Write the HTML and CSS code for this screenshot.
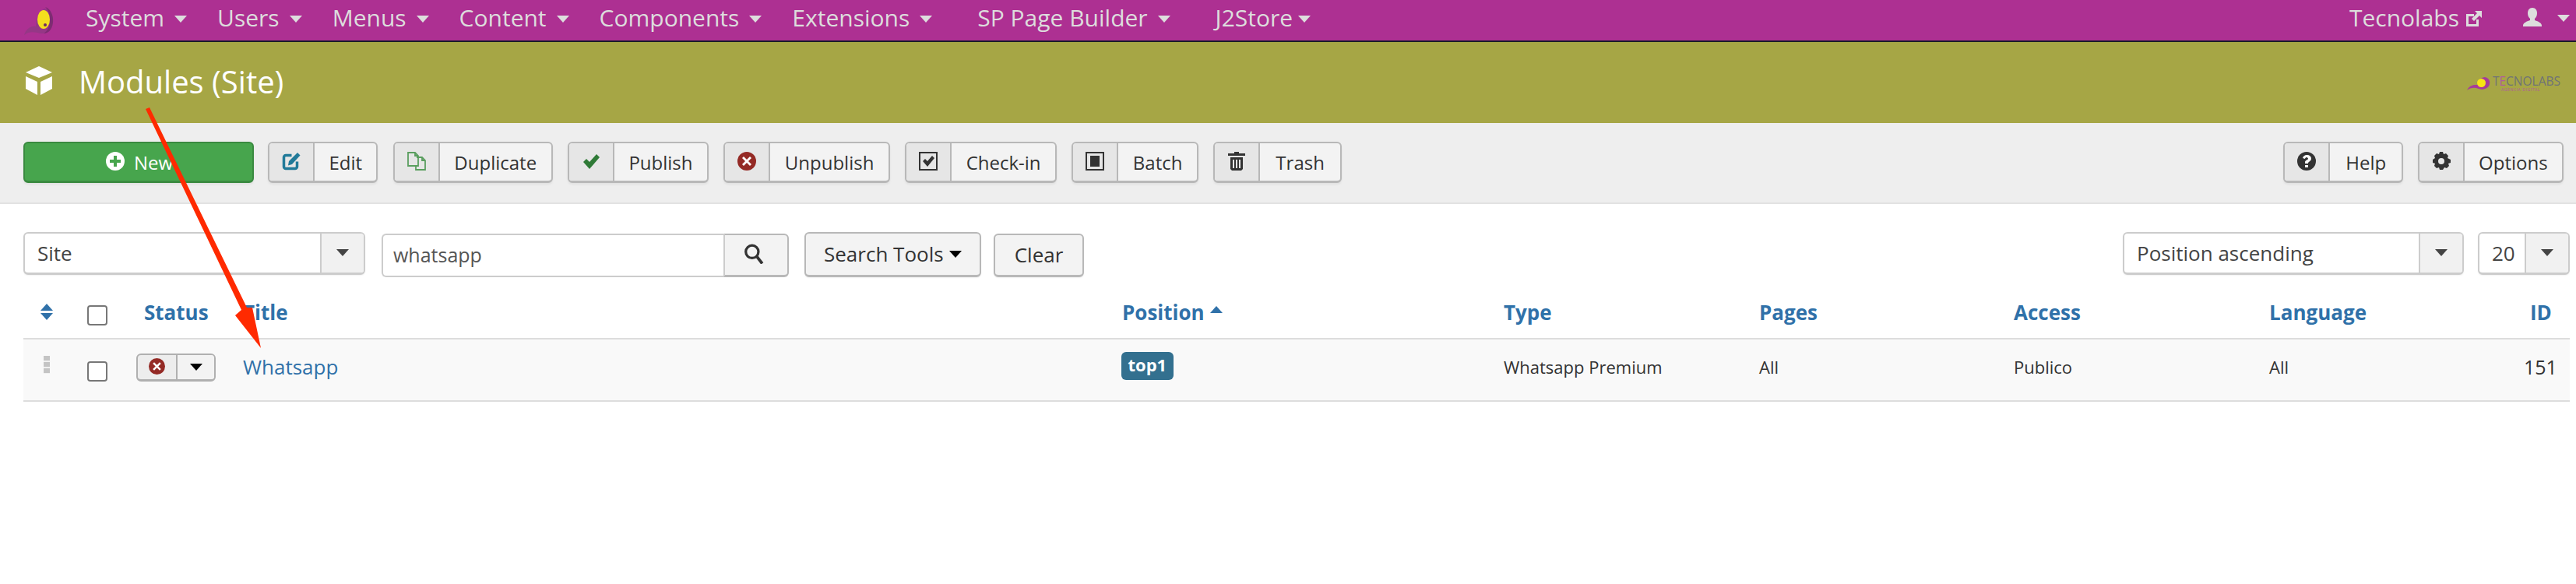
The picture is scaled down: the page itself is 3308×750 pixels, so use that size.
FILE: index.html
```html
<!DOCTYPE html>
<html lang="en">
<head>
<meta charset="utf-8">
<title>Modules (Site)</title>
<link rel="stylesheet" href="styles.css">
</head>
<body>
<nav class="navbar">
  <svg class="nav-logo" viewBox="0 0 38 40"><path d="M0 39C3 30 9 27 15 28C15 20 18 10 26 5C33 5 37 14 36 22C35 32 29 38 22 37C15 36 7 33 0 39Z" fill="#8d3a82" opacity=".75"/><path d="M27 3C34 5 38 14 37 23C36 32 31 37 25 37C30 34 33 28 33 20C33 12 31 7 27 3Z" fill="#7e2c72"/><ellipse cx="25" cy="19" rx="8" ry="12" fill="#f4df1e"/><circle cx="27" cy="26" r="2" fill="#6f2a63"/></svg>
  <a class="nav-item">System<i class="caret"></i></a>
  <a class="nav-item">Users<i class="caret"></i></a>
  <a class="nav-item">Menus<i class="caret"></i></a>
  <a class="nav-item">Content<i class="caret"></i></a>
  <a class="nav-item">Components<i class="caret"></i></a>
  <a class="nav-item nav-wide">Extensions<i class="caret"></i></a>
  <a class="nav-item nav-wide">SP Page Builder<i class="caret"></i></a>
  <a class="nav-item nav-tight">J2Store<i class="caret"></i></a>
  <a class="nav-site">Tecnolabs
    <svg class="nav-ext" viewBox="0 0 20 20"><path d="M13 11v6H3V7h7V4H0v16h16v-9zM11 0l3 3-7 7 3 3 7-7 3 3V0z" fill="currentColor"/></svg>
  </a>
  <svg class="nav-user" viewBox="0 0 24 24"><path d="M12 0c4 0 6 3 6 7 0 3-1 5-3 7v2c3 1 9 3 9 7v1H0v-1c0-4 6-6 9-7v-2C7 12 6 10 6 7c0-4 2-7 6-7z" fill="currentColor"/></svg>
  <i class="caret caret-user"></i>
</nav>

<header class="titlebar">
  <svg class="title-icon" viewBox="0 0 36 38"><path d="M18 0L35 8 18 15 1 8zM1 13L16 20V37L1 29zM35 13V29L20 37V20z" fill="#fff"/></svg>
  <h1 class="title">Modules (Site)</h1>
  <div class="brand">
    <svg class="brand-mark" viewBox="0 0 30 20"><path d="M0 19C3 12 9 12 13 12C15 6 19 2 23 2C28 3 30 7 29 11C28 17 20 19 15 17C10 15 5 15 0 19Z" fill="#a63c9a"/><circle cx="18.500" cy="9.500" r="5.500" fill="#f7e614"/></svg>
    <div class="brand-text"><span class="brand-name">T<span class="brand-e">E</span>CNOLABS</span><span class="brand-sub">AGENCIA DIGITAL</span></div>
  </div>
</header>

<section class="toolbar">
  <a class="btn btn-new"><svg class="ic-new" viewBox="0 0 24 24"><circle cx="12" cy="12" r="12" fill="#fff"/><path d="M10 5h4v5h5v4h-5v5h-4v-5H5v-4h5z" fill="#47a54d"/></svg>New</a>
  <a class="btn"><span class="btn-ic"><svg class="ic" viewBox="0 0 24 24"><path d="M12.500 4.500H5a2.500 2.500 0 00-2.500 2.500v12A2.500 2.500 0 005 21.500h12a2.500 2.500 0 002.500-2.500v-6.500" fill="none" stroke="#217a99" stroke-width="3.500"/><path d="M20 1l3.500 3.500L13 16l-5 1.500L9 12z" fill="#217a99"/></svg></span><span class="btn-tx">Edit</span></a>
  <a class="btn"><span class="btn-ic"><svg class="ic" viewBox="0 0 24 24"><path d="M1 1h9l4 4v13H1zM10 1v4h4" fill="none" stroke="#5a9e5f" stroke-width="1.800"/><path d="M12 7h7l4 4v12H11v-5M19 7v4h4" fill="none" stroke="#5a9e5f" stroke-width="1.800"/></svg></span><span class="btn-tx">Duplicate</span></a>
  <a class="btn"><span class="btn-ic"><svg class="ic" viewBox="0 0 24 24"><path d="M2 13l4-4 4 4L19 3l4 4-13 15z" fill="#2f7a37"/></svg></span><span class="btn-tx">Publish</span></a>
  <a class="btn"><span class="btn-ic"><svg class="ic" viewBox="0 0 24 24"><circle cx="12" cy="12" r="12" fill="#942a25"/><path d="M8 6l4 4 4-4 2 2-4 4 4 4-2 2-4-4-4 4-2-2 4-4-4-4z" fill="#fff"/></svg></span><span class="btn-tx">Unpublish</span></a>
  <a class="btn"><span class="btn-ic"><svg class="ic" viewBox="0 0 24 24"><rect x="1" y="1" width="22" height="22" fill="none" stroke="#333" stroke-width="2"/><path d="M5 12l3-3 3 3 6-7 3 3-9 11z" fill="#333"/></svg></span><span class="btn-tx">Check-in</span></a>
  <a class="btn"><span class="btn-ic"><svg class="ic" viewBox="0 0 24 24"><rect x="1" y="1" width="22" height="22" fill="none" stroke="#333" stroke-width="2"/><rect x="6" y="5" width="12" height="14" fill="#333"/></svg></span><span class="btn-tx">Batch</span></a>
  <a class="btn"><span class="btn-ic"><svg class="ic" viewBox="0 0 24 24"><path d="M9 0h6v2h8v3H1V2h8zM4 7h16v15l-2 2H6l-2-2zM7 10v11h2V10zm4 0v11h2V10zm4 0v11h2V10z" fill="#333" fill-rule="evenodd"/></svg></span><span class="btn-tx tx-trash">Trash</span></a>
  <a class="btn btn-push"><span class="btn-ic"><svg class="ic" viewBox="0 0 24 24"><circle cx="12" cy="12" r="12" fill="#333"/><path d="M7 8c1-3 3-4 5-4 4 0 6 2 6 5 0 2-2 3-3 4l-1 1v1h-4v-2c0-2 4-3 4-4 0-1-1-2-2-2s-2 1-2 2zM10 17h4v3h-4z" fill="#fff"/></svg></span><span class="btn-tx tx-help">Help</span></a>
  <a class="btn btn-gap"><span class="btn-ic"><svg class="ic" viewBox="0 0 24 24"><path d="M10 0h4l1 3 3-1 3 3-1 3 4 2v4l-3 1 1 3-3 3-3-1-2 3h-4l-1-3-3 1-3-3 1-3-3-1v-4l3-2-1-3 3-3 3 1zM12 8a4 4 0 100 8 4 4 0 000-8z" fill="#333" fill-rule="evenodd"/></svg></span><span class="btn-tx">Options</span></a>
</section>

<main class="content">
  <div class="filters">
    <div class="select sel-site"><span class="sel-val">Site</span><span class="sel-arrow"><i class="tri"></i></span></div>
    <div class="search"><span class="search-val">whatsapp</span><span class="search-btn"><svg class="ic-search" viewBox="0 0 24 24"><circle cx="10" cy="9.500" r="7.500" fill="none" stroke="#333" stroke-width="3"/><path d="M15 14.500l7 9" stroke="#333" stroke-width="3.500" fill="none"/></svg></span></div>
    <a class="plain-btn btn-tools">Search Tools<i class="tri tri-black"></i></a>
    <a class="plain-btn btn-clear">Clear</a>
    <div class="select sel-order"><span class="sel-val">Position ascending</span><span class="sel-arrow"><i class="tri"></i></span></div>
    <div class="select sel-limit"><span class="sel-val">20</span><span class="sel-arrow"><i class="tri"></i></span></div>
  </div>

  <table class="grid">
    <colgroup>
      <col class="c-sort"><col class="c-check"><col class="c-status"><col class="c-title"><col class="c-pos"><col class="c-type"><col class="c-pages"><col class="c-access"><col class="c-lang"><col class="c-id">
    </colgroup>
    <thead>
      <tr>
        <th><span class="sort-ic"><i class="up"></i><i class="down"></i></span></th>
        <th><span class="check check-head"></span></th>
        <th class="th-status">Status</th>
        <th>Title</th>
        <th>Position<i class="up up-th"></i></th>
        <th>Type</th>
        <th>Pages</th>
        <th>Access</th>
        <th>Language</th>
        <th class="th-id">ID</th>
      </tr>
    </thead>
    <tbody>
      <tr>
        <td><span class="drag"></span></td>
        <td><span class="check check-row"></span></td>
        <td><span class="status"><span class="status-ic"><svg class="ic-x" viewBox="0 0 24 24"><circle cx="12" cy="12" r="12" fill="#942a25"/><path d="M8 6l4 4 4-4 2 2-4 4 4 4-2 2-4-4-4 4-2-2 4-4-4-4z" fill="#fff"/></svg></span><span class="status-dd"><i class="tri tri-black"></i></span></span></td>
        <td><a class="link">Whatsapp</a></td>
        <td><span class="badge">top1</span></td>
        <td class="small">Whatsapp Premium</td>
        <td class="small">All</td>
        <td class="small">Publico</td>
        <td class="small">All</td>
        <td class="num">151</td>
      </tr>
    </tbody>
  </table>
</main>

<svg class="arrow" viewBox="0 0 400 460"><path d="M187 140L192 138L317 395L324 395L335 447L302 405L310 398Z" fill="#ff2a00"/></svg>
</body>
</html>
```

FILE: styles.css
```css
* { box-sizing: border-box; }
html, body { margin: 0; padding: 0; background: #fff; }
body { font-family: "Open Sans", "Liberation Sans", sans-serif; color: #333; height: 750px; overflow: hidden; position: relative; }
i { display: inline-block; font-style: normal; }

.navbar { height: 54px; background: #ad3092; border-bottom: 2px solid #1a1a2a; display: flex; align-items: center; color: #dddddd; font-size: 30px; padding-left: 31px; padding-bottom: 8px; }
.nav-logo { width: 38px; height: 40px; margin-right: 41px; margin-top: 8px; }
.nav-item { display: flex; align-items: center; margin-right: 39px; white-space: nowrap; }
.nav-wide { margin-right: 58px; }
.nav-tight .caret { margin-left: 7px; margin-top: 4px; }
.caret { width: 0; height: 0; border-left: 8px solid transparent; border-right: 8px solid transparent; border-top: 9px solid #dddddd; margin-left: 13px; margin-top: 4px; }
.nav-site { margin-left: auto; display: flex; align-items: center; white-space: nowrap; }
.nav-ext { width: 20px; height: 20px; margin-left: 9px; margin-top: 4px; }
.nav-user { width: 24px; height: 24px; margin-left: 53px; }
.caret-user { margin-left: 20px; margin-right: 8px; margin-top: 2px; }

.titlebar { height: 104px; background: #a6a645; display: flex; align-items: center; padding-left: 32px; padding-right: 20px; }
.title-icon { width: 36px; height: 38px; margin-right: 33px; margin-bottom: 4px; }
.title { margin: 0 0 2px; font-size: 40px; font-weight: 400; color: #fff; line-height: 1.2; }
.brand { margin-left: auto; display: flex; align-items: center; margin-top: 2px; }
.brand-mark { width: 30px; height: 20px; margin-right: 3px; }
.brand-text { display: flex; flex-direction: column; align-items: flex-end; }
.brand-name { font-size: 15.500px; line-height: 15px; color: #6f7376; }
.brand-e { color: #b05aa0; }
.brand-sub { font-size: 5px; line-height: 6px; letter-spacing: 0.6px; color: #b05aa0; margin-right: 26px; }

.toolbar { height: 104px; background: #eeeeee; border-bottom: 2px solid #e2e2e2; display: flex; align-items: flex-start; padding: 24px 16px 0 30px; gap: 19.500px; }
.btn { height: 53px; display: flex; align-items: stretch; background: #f3f3f3; border: 2px solid #b8b8b8; border-bottom-width: 3px; border-radius: 6px; font-size: 24px; color: #333; box-shadow: 0 2px 3px rgba(0,0,0,.06); overflow: hidden; white-space: nowrap; }
.btn-ic { width: 58px; background: #e6e6e6; border-right: 2px solid #b8b8b8; display: flex; align-items: flex-start; justify-content: center; padding-top: 11px; flex: none; }
.ic { width: 24px; height: 24px; }
.btn-tx { padding: 0 18.400px; line-height: 49px; }
.tx-help { padding: 0 20px; }
.tx-trash { padding: 0 20px; }
.btn-new { width: 296px; margin-right: -1.500px; background: #47a54d; border-color: #3a8a40; color: #fff; justify-content: center; align-items: center; padding-left: 4px; }
.ic-new { width: 24px; height: 24px; margin-right: 12px; margin-left: -2px; margin-top: -2px; }
.btn-push { margin-left: auto; }
.btn-gap { margin-left: -1px; }

.content { padding: 36px 8px 0 30px; }
.filters { display: flex; align-items: flex-start; height: 60px; }
.select { height: 55px; background: #fff; border: 2px solid #cccccc; border-bottom-width: 3px; border-radius: 6px; display: flex; font-size: 26px; color: #444; box-shadow: 0 1px 2px rgba(0,0,0,.06); overflow: hidden; }
.sel-val { flex: 1; padding-left: 16px; line-height: 51px; white-space: nowrap; }
.sel-arrow { width: 56px; background: #f1f1f1; border-left: 2px solid #cccccc; display: flex; justify-content: center; padding-top: 20px; flex: none; }
.sel-site { width: 439px; }
.sel-order { width: 438px; margin-left: auto; }
.sel-limit { width: 118px; margin-left: 18px; }
.tri { width: 0; height: 0; border-left: 8px solid transparent; border-right: 8px solid transparent; border-top: 9px solid #444; }
.tri-black { border-top-color: #000; }
.search { width: 523px; height: 56px; margin-left: 21px; margin-top: 2px; display: flex; font-size: 25px; color: #555; }
.search-val { flex: 1; border: 2px solid #cccccc; border-right: 0; border-radius: 6px 0 0 6px; padding-left: 13px; line-height: 50px; }
.search-btn { width: 84px; background: #f3f3f3; border: 2px solid #cccccc; border-bottom: 3px solid #b8b8b8; border-top-color: #b8b8b8; border-right-color: #b8b8b8; border-radius: 0 6px 6px 0; display: flex; justify-content: center; padding-top: 11px; padding-right: 6px; }
.ic-search { width: 26px; height: 26px; }
.plain-btn { background: #f3f3f3; border: 2px solid #b8b8b8; border-bottom-width: 3px; border-radius: 6px; font-size: 26px; color: #333; display: flex; white-space: nowrap; box-shadow: 0 1px 2px rgba(0,0,0,.06); }
.btn-tools { width: 227px; height: 58px; margin-left: 20px; padding-left: 23px; line-height: 53px; align-items: flex-start; }
.btn-tools .tri { margin-left: 7px; margin-top: 22px; }
.btn-clear { width: 116px; height: 56px; margin-left: 16px; margin-top: 2px; justify-content: center; line-height: 50px; }

.grid { width: 3270px; border-collapse: separate; border-spacing: 0; table-layout: fixed; }
.c-sort { width: 82px; } .c-check { width: 63px; } .c-status { width: 137px; } .c-title { width: 1129px; } .c-pos { width: 490px; } .c-type { width: 328px; } .c-pages { width: 327px; } .c-access { width: 328px; } .c-lang { width: 327px; } .c-id { width: 59px; }
th { height: 78px; padding: 25px 0 0; text-align: left; vertical-align: top; font-size: 26px; line-height: 36px; font-weight: 700; color: #3071a9; border-bottom: 2px solid #dddddd; white-space: nowrap; }
td { height: 80px; padding: 17px 0 0; vertical-align: top; background: #f9f9f9; border-bottom: 2px solid #dddddd; line-height: 36px; font-size: 26px; white-space: nowrap; }
.th-status { padding-left: 10px; }
.th-id { padding-left: 8px; }
.sort-ic { display: flex; flex-direction: column; align-items: center; width: 16px; margin: 7px 0 0 22px; gap: 3px; }
.up { width: 0; height: 0; border-left: 8px solid transparent; border-right: 8px solid transparent; border-bottom: 9px solid #3071a9; }
.down { width: 0; height: 0; border-left: 8px solid transparent; border-right: 8px solid transparent; border-top: 9px solid #3071a9; }
.up-th { margin-left: 7px; vertical-align: 9px; }
.check { display: block; width: 26px; height: 26px; background: #fff; border: 2px solid #777; border-radius: 4px; }
.check-head { margin-top: 9px; }
.check-row { margin-top: 11px; }
.drag { display: block; width: 8px; height: 23px; margin: 4px 0 0 26px; background: repeating-linear-gradient(#c4c4c4 0 6px, #f0f0f0 6px 8px); }
.status { display: flex; width: 102px; height: 36px; margin-top: 1px; background: #ededed; border: 2px solid #b0b0b0; border-bottom-width: 3px; border-radius: 6px; overflow: hidden; }
.status-ic { width: 51px; border-right: 2px solid #b0b0b0; display: flex; justify-content: center; padding-top: 4px; }
.ic-x { width: 21px; height: 21px; }
.status-dd { flex: 1; background: #f3f3f3; display: flex; justify-content: center; padding-top: 11px; }
.link { color: #3071a9; }
.badge { display: inline-block; height: 36px; background: #33708f; color: #fff; font-size: 22px; font-weight: 700; line-height: 33px; padding: 0 8.500px; border-radius: 6px; margin-left: -1px; margin-top: -1px; vertical-align: top; }
.small { font-size: 22px; }
.num { font-size: 25px; text-align: right; padding-right: 19px; }

.arrow { position: absolute; left: 0; top: 0; width: 400px; height: 460px; pointer-events: none; }
```
